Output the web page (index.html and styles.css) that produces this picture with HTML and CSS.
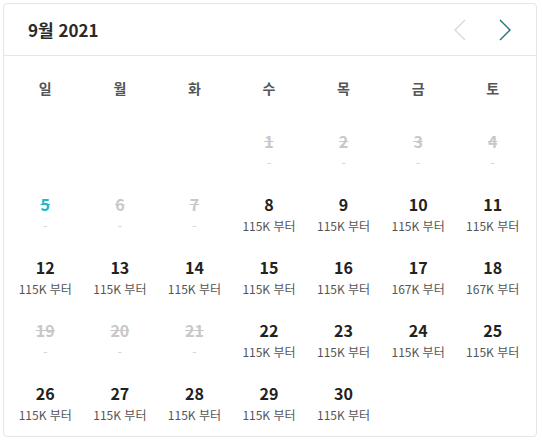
FILE: index.html
```html
<!DOCTYPE html>
<html lang="ko">
<head>
<meta charset="utf-8">
<link rel="stylesheet" href="styles.css">
</head>
<body>
<div class="card">
  <div class="header">
    <div class="title">9월 2021</div>
    <div class="nav">
      <span class="arrow prev"><svg width="14" height="22" viewBox="0 0 14 22"><path d="M12 1 L2 11 L12 21" fill="none" stroke="currentColor" stroke-width="1.4"/></svg></span>
      <span class="arrow next"><svg width="14" height="22" viewBox="0 0 14 22"><path d="M2 1 L12 11 L2 21" fill="none" stroke="currentColor" stroke-width="1.4"/></svg></span>
    </div>
  </div>
  <div class="grid">
    <div class="wd">일</div><div class="wd">월</div><div class="wd">화</div><div class="wd">수</div><div class="wd">목</div><div class="wd">금</div><div class="wd">토</div>

    <div class="day empty"></div><div class="day empty"></div><div class="day empty"></div>
    <div class="day off"><span class="n">1</span><span class="p">-</span></div>
    <div class="day off"><span class="n">2</span><span class="p">-</span></div>
    <div class="day off"><span class="n">3</span><span class="p">-</span></div>
    <div class="day off"><span class="n">4</span><span class="p">-</span></div>

    <div class="day off today"><span class="n">5</span><span class="p">-</span></div>
    <div class="day off"><span class="n">6</span><span class="p">-</span></div>
    <div class="day off"><span class="n">7</span><span class="p">-</span></div>
    <div class="day"><span class="n">8</span><span class="p">115K 부터</span></div>
    <div class="day"><span class="n">9</span><span class="p">115K 부터</span></div>
    <div class="day"><span class="n">10</span><span class="p">115K 부터</span></div>
    <div class="day"><span class="n">11</span><span class="p">115K 부터</span></div>

    <div class="day"><span class="n">12</span><span class="p">115K 부터</span></div>
    <div class="day"><span class="n">13</span><span class="p">115K 부터</span></div>
    <div class="day"><span class="n">14</span><span class="p">115K 부터</span></div>
    <div class="day"><span class="n">15</span><span class="p">115K 부터</span></div>
    <div class="day"><span class="n">16</span><span class="p">115K 부터</span></div>
    <div class="day"><span class="n">17</span><span class="p">167K 부터</span></div>
    <div class="day"><span class="n">18</span><span class="p">167K 부터</span></div>

    <div class="day off"><span class="n">19</span><span class="p">-</span></div>
    <div class="day off"><span class="n">20</span><span class="p">-</span></div>
    <div class="day off"><span class="n">21</span><span class="p">-</span></div>
    <div class="day"><span class="n">22</span><span class="p">115K 부터</span></div>
    <div class="day"><span class="n">23</span><span class="p">115K 부터</span></div>
    <div class="day"><span class="n">24</span><span class="p">115K 부터</span></div>
    <div class="day"><span class="n">25</span><span class="p">115K 부터</span></div>

    <div class="day"><span class="n">26</span><span class="p">115K 부터</span></div>
    <div class="day"><span class="n">27</span><span class="p">115K 부터</span></div>
    <div class="day"><span class="n">28</span><span class="p">115K 부터</span></div>
    <div class="day"><span class="n">29</span><span class="p">115K 부터</span></div>
    <div class="day"><span class="n">30</span><span class="p">115K 부터</span></div>
  </div>
</div>
</body>
</html>
```
FILE: styles.css
```css
html, body { margin: 0; padding: 0; background: #fff; }
body {
  font-family: "Noto Sans CJK KR", "Noto Sans", sans-serif;
  color: #333;
  padding: 3px;
}
.card {
  width: 534px;
  height: 434px;
  box-sizing: border-box;
  border: 1px solid #e6e6e6;
  border-radius: 4px;
  overflow: hidden;
}
.header {
  height: 52px;
  box-sizing: border-box;
  border-bottom: 1px solid #e6e6e6;
  display: flex;
  align-items: center;
  justify-content: space-between;
  padding: 0 24px 0 24px;
}
.title {
  font-size: 17px;
  font-weight: 700;
  color: #2a2a2a;
}
.nav { display: flex; gap: 31px; align-items: center; }
.arrow { display: flex; }
.prev { color: #d9d9d9; }
.next { color: #1f6f7d; }
.grid {
  display: grid;
  grid-template-columns: repeat(7, 1fr);
  padding: 0 6px 0 4px;
}
.wd {
  text-align: center;
  font-size: 14px;
  font-weight: 700;
  color: #555;
  line-height: 20px;
  padding: 22px 0 23px;
}
.day {
  display: flex;
  flex-direction: column;
  align-items: center;
  height: 63px;
  box-sizing: border-box;
  padding-top: 8px;
}
.n {
  font-size: 16px;
  font-weight: 700;
  line-height: 24px;
  color: #222;
}
.p {
  font-size: 12px;
  line-height: 20px;
  color: #555;
}
.off .n { color: #c8c8c8; text-decoration: line-through; }
.off .p { color: #d0d0d0; }
.today .n { color: #22b8c8; }
```
